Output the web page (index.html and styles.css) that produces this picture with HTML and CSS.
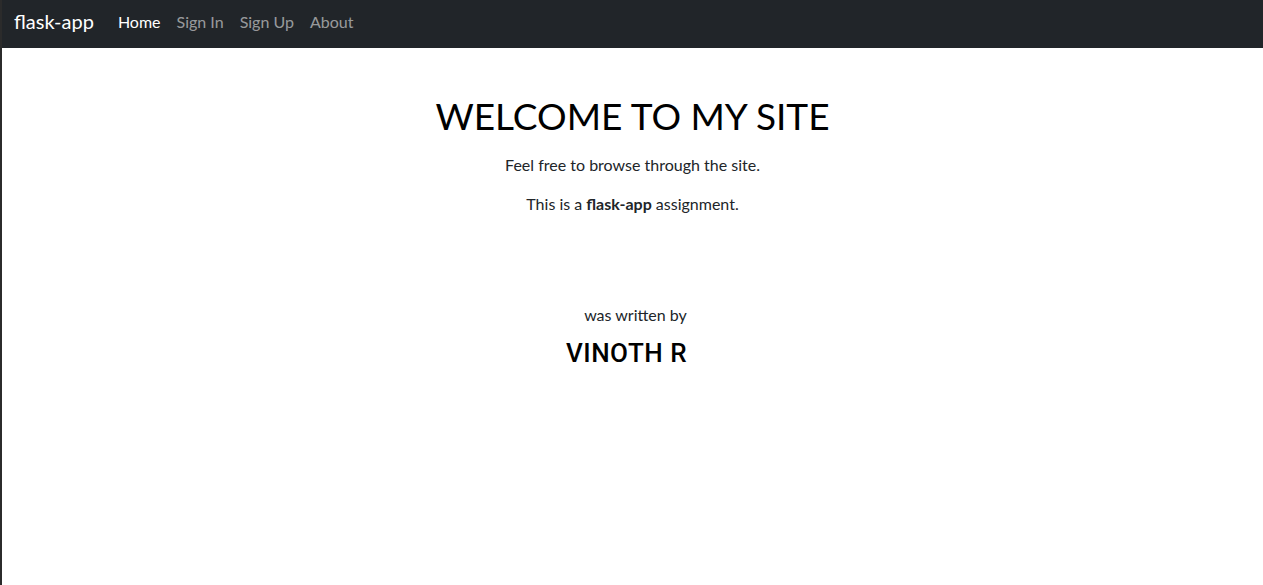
FILE: index.html
```html
<!DOCTYPE html>
<html lang="en">
<head>
<meta charset="utf-8">
<title>flask-app</title>
<link rel="stylesheet" href="styles.css">
</head>
<body>
<nav class="navbar">
  <a class="brand" href="#">flask-app</a>
  <ul class="nav">
    <li><a class="nav-link active" href="#">Home</a></li>
    <li><a class="nav-link" href="#">Sign In</a></li>
    <li><a class="nav-link" href="#">Sign Up</a></li>
    <li><a class="nav-link" href="#">About</a></li>
  </ul>
</nav>
<main class="content">
  <h1 class="title">WELCOME TO MY SITE</h1>
  <p class="lead-text">Feel free to browse through the site.</p>
  <p class="lead-text">This is a <b>flask-app</b> assignment.</p>
  <div class="author">
    <p class="by">was written by</p>
    <h3 class="name">VINOTH R</h3>
  </div>
</main>
</body>
</html>
```
FILE: styles.css
```css
html, body {
  margin: 0;
  padding: 0;
  height: 100%;
}
body {
  font-family: "Lato", "Noto Sans", sans-serif;
  font-size: 16px;
  color: #212529;
  background: #fff;
  border-left: 2px solid #2b2b2b;
  box-sizing: border-box;
}
.navbar {
  display: flex;
  align-items: center;
  height: 48px;
  box-sizing: border-box;
  padding: 0 12px 6px;
  background: #212529;
}
.brand {
  color: #fff;
  text-decoration: none;
  font-size: 20px;
  margin-right: 16px;
}
.nav {
  display: flex;
  list-style: none;
  margin: 0;
  padding: 0;
}
.nav-link {
  display: block;
  padding: 8px 8px;
  color: rgba(255,255,255,.55);
  text-decoration: none;
  font-size: 16px;
}
.nav-link.active {
  color: #fff;
}
.content {
  display: flex;
  flex-direction: column;
  align-items: center;
  padding-top: 46px;
}
.title {
  margin: 0 0 15px;
  font-size: 37px;
  font-weight: 400;
  color: #000;
  line-height: 1.2;
}
.lead-text {
  margin: 0 0 15px;
  line-height: 1.5;
}
.author {
  display: flex;
  flex-direction: column;
  align-items: center;
  margin-top: 72px;
}
.by {
  margin: 0 0 11px 6px;
  line-height: 1.5;
}
.name {
  margin: 0 12px 0 0;
  font-family: "Roboto", sans-serif;
  font-weight: 500;
  font-size: 26px;
  color: #000;
  line-height: 1.2;
  letter-spacing: 0.5px;
}
```
